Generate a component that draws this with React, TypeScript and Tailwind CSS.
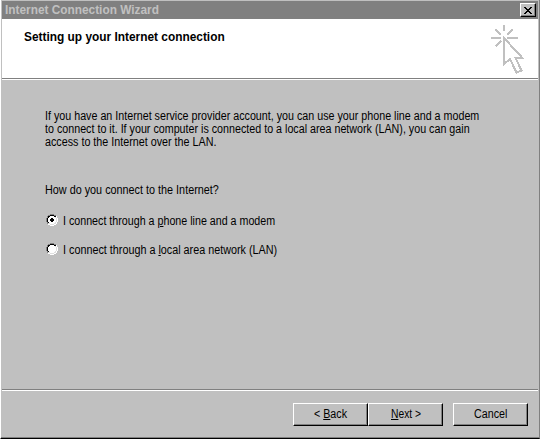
import { useLayoutEffect, useRef, useState } from "react";
import type { ReactNode } from "react";

// narrows or widens the text to the advance of the old 8pt system font
function Label({
  width,
  className = "",
  children,
}: {
  width: number;
  className?: string;
  children: ReactNode;
}) {
  const textRef = useRef<HTMLSpanElement>(null);
  const [scale, setScale] = useState(1);

  useLayoutEffect(() => {
    if (textRef.current) {
      setScale(width / textRef.current.offsetWidth);
    }
  }, [width]);

  return (
    <div className={`h-[13px] ${className}`} style={{ width }}>
      <span
        ref={textRef}
        className="block w-max whitespace-nowrap origin-left"
        style={{ transform: `scaleX(${scale})` }}
      >
        {children}
      </span>
    </div>
  );
}

function PushButton({ children }: { children: ReactNode }) {
  return (
    <button className="w-[75px] h-[23px] flex items-center justify-center bg-[#c0c0c0] border border-t-white border-l-white border-r-black border-b-black shadow-[inset_-1px_-1px_0_#808080]">
      {children}
    </button>
  );
}

function Radio({ checked = false }: { checked?: boolean }) {
  return (
    <svg
      width="12"
      height="12"
      viewBox="0 0 12 12"
      shapeRendering="crispEdges"
      className="self-start -mt-px"
    >
      <path fill="#fff" d="M4 1h4v1h2v2h1v4h-1v2H8v1H4v-1H2V8H1V4h1V2h2z" />
      <path fill="#808080" d="M4 0h4v1H4zM2 1h2v1H2zM8 1h2v1H8zM1 2h1v2H1zM0 4h1v4H0zM1 8h1v2H1z" />
      <path fill="#000" d="M4 1h4v1H4zM2 2h2v1H3v1H2zM8 2h2v1H8zM1 4h1v4H1zM2 8h1v1H2z" />
      <path fill="#dfdfdf" d="M9 3h1v1H9zM10 4h1v4h-1zM9 8h1v1H9zM8 9h2v1H8zM4 10h4v1H4zM2 9h2v1H2z" />
      <path fill="#fff" d="M10 2h1v2h-1zM11 4h1v4h-1zM10 8h1v2h-1zM8 10h2v1H8zM4 11h4v1H4zM2 10h2v1H2z" />
      {checked && <path fill="#000" d="M5 4h2v1h1v2H7v1H5V7H4V5h1z" />}
    </svg>
  );
}

function WizardCursor() {
  return (
    <svg
      width="34"
      height="50"
      viewBox="0 0 34 50"
      fill="none"
      stroke="#c0c0c0"
      strokeWidth="2"
      shapeRendering="crispEdges"
    >
      <path d="M14 0v6M1 13h10M17 13h11M5.5 4.5l5.5 5.5M22.5 4.5l-5.5 5.5M5.5 21.5l5.5-5.5" />
      <path d="M14 13v26l6-5 6.5 13.5 5-2L25.5 33h7z" />
    </svg>
  );
}

export default function App() {
  return (
    <div className="w-[540px] h-[439px] flex flex-col overflow-hidden bg-[#c0c0c0] text-black font-['Liberation_Sans',sans-serif] text-[12px] leading-[13px] border-l border-l-white border-r border-r-[#808080] border-b border-b-black shadow-[inset_0_-1px_0_#808080]">
      <div className="h-[18px] mt-px ml-px mr-px shrink-0 flex items-center justify-between bg-[#808080] pl-[3px] pr-[2px] text-[#c0c0c0] font-bold">
        <Label width={154}>Internet Connection Wizard</Label>
        <button
          aria-label="Close"
          className="w-4 h-[14px] flex items-center justify-center bg-[#c0c0c0] border border-t-white border-l-white border-r-black border-b-black shadow-[inset_-1px_-1px_0_#808080]"
        >
          <svg width="8" height="7" viewBox="0 0 8 7" shapeRendering="crispEdges">
            <path d="M0 0h2v1h1v1h2V1h1V0h2v1H7v1H6v1H5v1h1v1h1v1h1v1H6V6H5V5H3v1H2v1H0V6h1V5h1V4h1V3H2V2H1V1H0z" />
          </svg>
        </button>
      </div>

      <div className="h-[60px] ml-px mr-px shrink-0 flex justify-between bg-white border-b border-b-[#808080] pl-[22px] pr-[14px]">
        <Label width={201} className="mt-3 font-bold">
          Setting up your Internet connection
        </Label>
        <div className="mt-[6px]">
          <WizardCursor />
        </div>
      </div>

      <div className="h-[311px] ml-px mr-px shrink-0 border-t border-t-white border-b border-b-[#808080] pl-[43px]">
        <div className="mt-[30px]">
          <Label width={434}>
            If you have an Internet service provider account, you can use your phone line and a modem
          </Label>
          <Label width={425}>
            to connect to it. If your computer is connected to a local area network (LAN), you can gain
          </Label>
          <Label width={171}>access to the Internet over the LAN.</Label>
        </div>
        <Label width={174} className="mt-[35px]">
          How do you connect to the Internet?
        </Label>
        <div className="mt-[18px] ml-px flex items-center gap-[5px]">
          <Radio checked />
          <Label width={212}>
            I connect through a <u>p</u>hone line and a modem
          </Label>
        </div>
        <div className="mt-4 ml-px flex items-center gap-[5px]">
          <Radio />
          <Label width={214}>
            I connect through a <u>l</u>ocal area network (LAN)
          </Label>
        </div>
      </div>

      <div className="ml-px mr-px flex-1 border-t border-t-white flex justify-end items-start pt-3 pr-[10px]">
        <PushButton>
          <Label width={33}>
            &lt; <u>B</u>ack
          </Label>
        </PushButton>
        <PushButton>
          <Label width={30}>
            <u>N</u>ext &gt;
          </Label>
        </PushButton>
        <div className="ml-[10px]">
          <PushButton>
            <Label width={33}>Cancel</Label>
          </PushButton>
        </div>
      </div>
    </div>
  );
}
